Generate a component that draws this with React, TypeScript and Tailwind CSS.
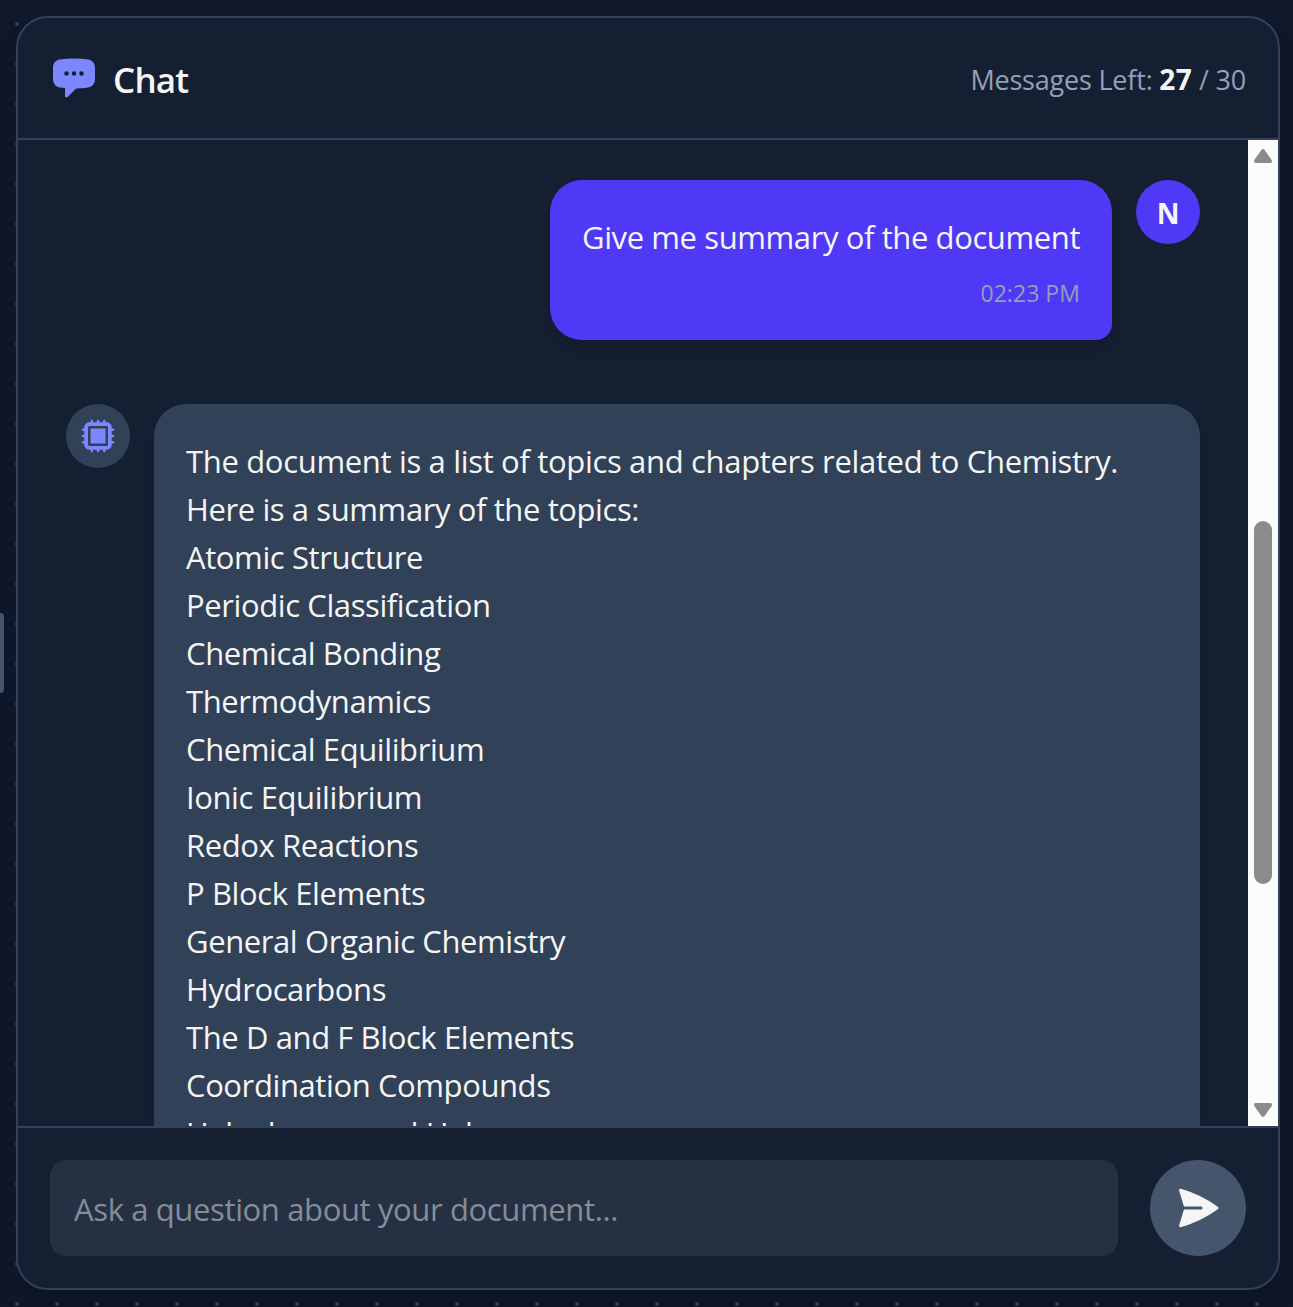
import { HiChatBubbleLeftEllipsis, HiCpuChip, HiPaperAirplane } from "react-icons/hi2";

const topics = [
  "Atomic Structure",
  "Periodic Classification",
  "Chemical Bonding",
  "Thermodynamics",
  "Chemical Equilibrium",
  "Ionic Equilibrium",
  "Redox Reactions",
  "P Block Elements",
  "General Organic Chemistry",
  "Hydrocarbons",
  "The D and F Block Elements",
  "Coordination Compounds",
  "Haloalcanes and Haloarenes",
];

function Header() {
  return (
    <header className="flex h-[122px] shrink-0 items-center justify-between border-b-2 border-[#314158] px-8">
      <div className="flex items-center gap-[15px]">
        <HiChatBubbleLeftEllipsis className="size-12 text-[#7c86ff]" />
        <h2 className="pt-1 text-[35px] leading-[56px] font-semibold tracking-[-0.8px]">Chat</h2>
      </div>
      <p className="pt-0.5 text-[27px] leading-10 tracking-[-0.2px] whitespace-pre text-[#90a1b9]">
        Messages Left: <span className="text-[28px] font-bold tracking-[0.4px] text-[#f5f5f5]">27</span> / 30
      </p>
    </header>
  );
}

function UserMessage() {
  return (
    <div className="flex items-start justify-end gap-6">
      <div className="w-[562px] rounded-[32px] rounded-br-[16px] bg-[#4f39f6] px-8 pt-[33px] pb-[31px] shadow-[0_8px_12px_-2px_rgba(0,0,0,0.08),0_4px_8px_-4px_rgba(0,0,0,0.08)]">
        <p className="tracking-[-0.4px] whitespace-nowrap">Give me summary of the document</p>
        <p className="mt-4 text-right text-[23px] leading-8 tracking-[0.05px] text-[#90a1b9]">02:23 PM</p>
      </div>
      <div className="flex size-16 shrink-0 items-center justify-center rounded-full bg-[#4f39f6] pt-0.5 text-[28px] leading-10 font-bold">
        N
      </div>
    </div>
  );
}

function AssistantMessage() {
  return (
    <div className="flex items-start gap-6">
      <div className="flex size-16 shrink-0 items-center justify-center rounded-full bg-[#314158]">
        <HiCpuChip className="size-10 text-[#7c86ff]" />
      </div>
      <div className="flex-1 rounded-[32px] rounded-bl-[16px] bg-[#314158] px-8 pt-[33px] pb-[31px] whitespace-nowrap shadow-md">
        <p className="tracking-[-0.33px]">The document is a list of topics and chapters related to Chemistry.</p>
        <p>Here is a summary of the topics:</p>
        {topics.map((topic) => (
          <p key={topic}>{topic}</p>
        ))}
      </div>
    </div>
  );
}

function Scrollbar() {
  return (
    <div className="flex w-[30px] shrink-0 flex-col items-center bg-[#fcfcfc] pt-[9px] pb-[9px]">
      <svg className="h-[14px] w-[18px] shrink-0" viewBox="0 0 18 14" fill="#8b8b8b">
        <path d="M7.2 1.2Q9-1.2 10.8 1.2L17.5 10.8Q19 14 16 14H2Q-1 14 .5 10.8Z" />
      </svg>
      <div className="mt-[358px] h-[363px] w-[18px] shrink-0 rounded-full bg-[#8b8b8b]" />
      <svg className="mt-auto h-[14px] w-[18px] shrink-0 rotate-180" viewBox="0 0 18 14" fill="#8b8b8b">
        <path d="M7.2 1.2Q9-1.2 10.8 1.2L17.5 10.8Q19 14 16 14H2Q-1 14 .5 10.8Z" />
      </svg>
    </div>
  );
}

function Composer() {
  return (
    <form className="flex h-[162px] shrink-0 items-center gap-8 border-t-2 border-[#314158] px-8">
      <input
        className="h-24 min-w-0 flex-1 rounded-2xl bg-[#253143] px-6 pt-0.5 tracking-[-0.37px] outline-none placeholder:text-[#858d98]"
        placeholder="Ask a question about your document..."
      />
      <button
        type="button"
        aria-label="Send"
        className="flex size-24 shrink-0 items-center justify-center rounded-full bg-[#45556c]"
      >
        <HiPaperAirplane className="size-12" />
      </button>
    </form>
  );
}

export default function App() {
  return (
    <div className="flex h-[1307px] w-[1293px] items-start overflow-hidden bg-[#0f172b] bg-[radial-gradient(circle,#314158_2px,transparent_2px)] bg-[size:40px_40px] bg-[position:-3px_4px] font-['Open_Sans',sans-serif] text-[31px] leading-12 tracking-[-0.4px] text-[#f5f5f5]">
      <div className="mt-[613px] h-20 w-1 shrink-0 rounded-r-[4px] bg-[#45556c]" />
      <section className="mt-4 ml-3 flex h-[1274px] w-[1264px] shrink-0 flex-col overflow-hidden rounded-[32px] border-2 border-[#314158] bg-[#151f32] shadow-[0_20px_30px_-6px_rgba(0,0,0,0.12)]">
        <Header />
        <div className="flex min-h-0 flex-1">
          <div className="flex min-w-0 flex-1 flex-col gap-16 overflow-hidden px-12 pt-10">
            <UserMessage />
            <AssistantMessage />
          </div>
          <Scrollbar />
        </div>
        <Composer />
      </section>
    </div>
  );
}
